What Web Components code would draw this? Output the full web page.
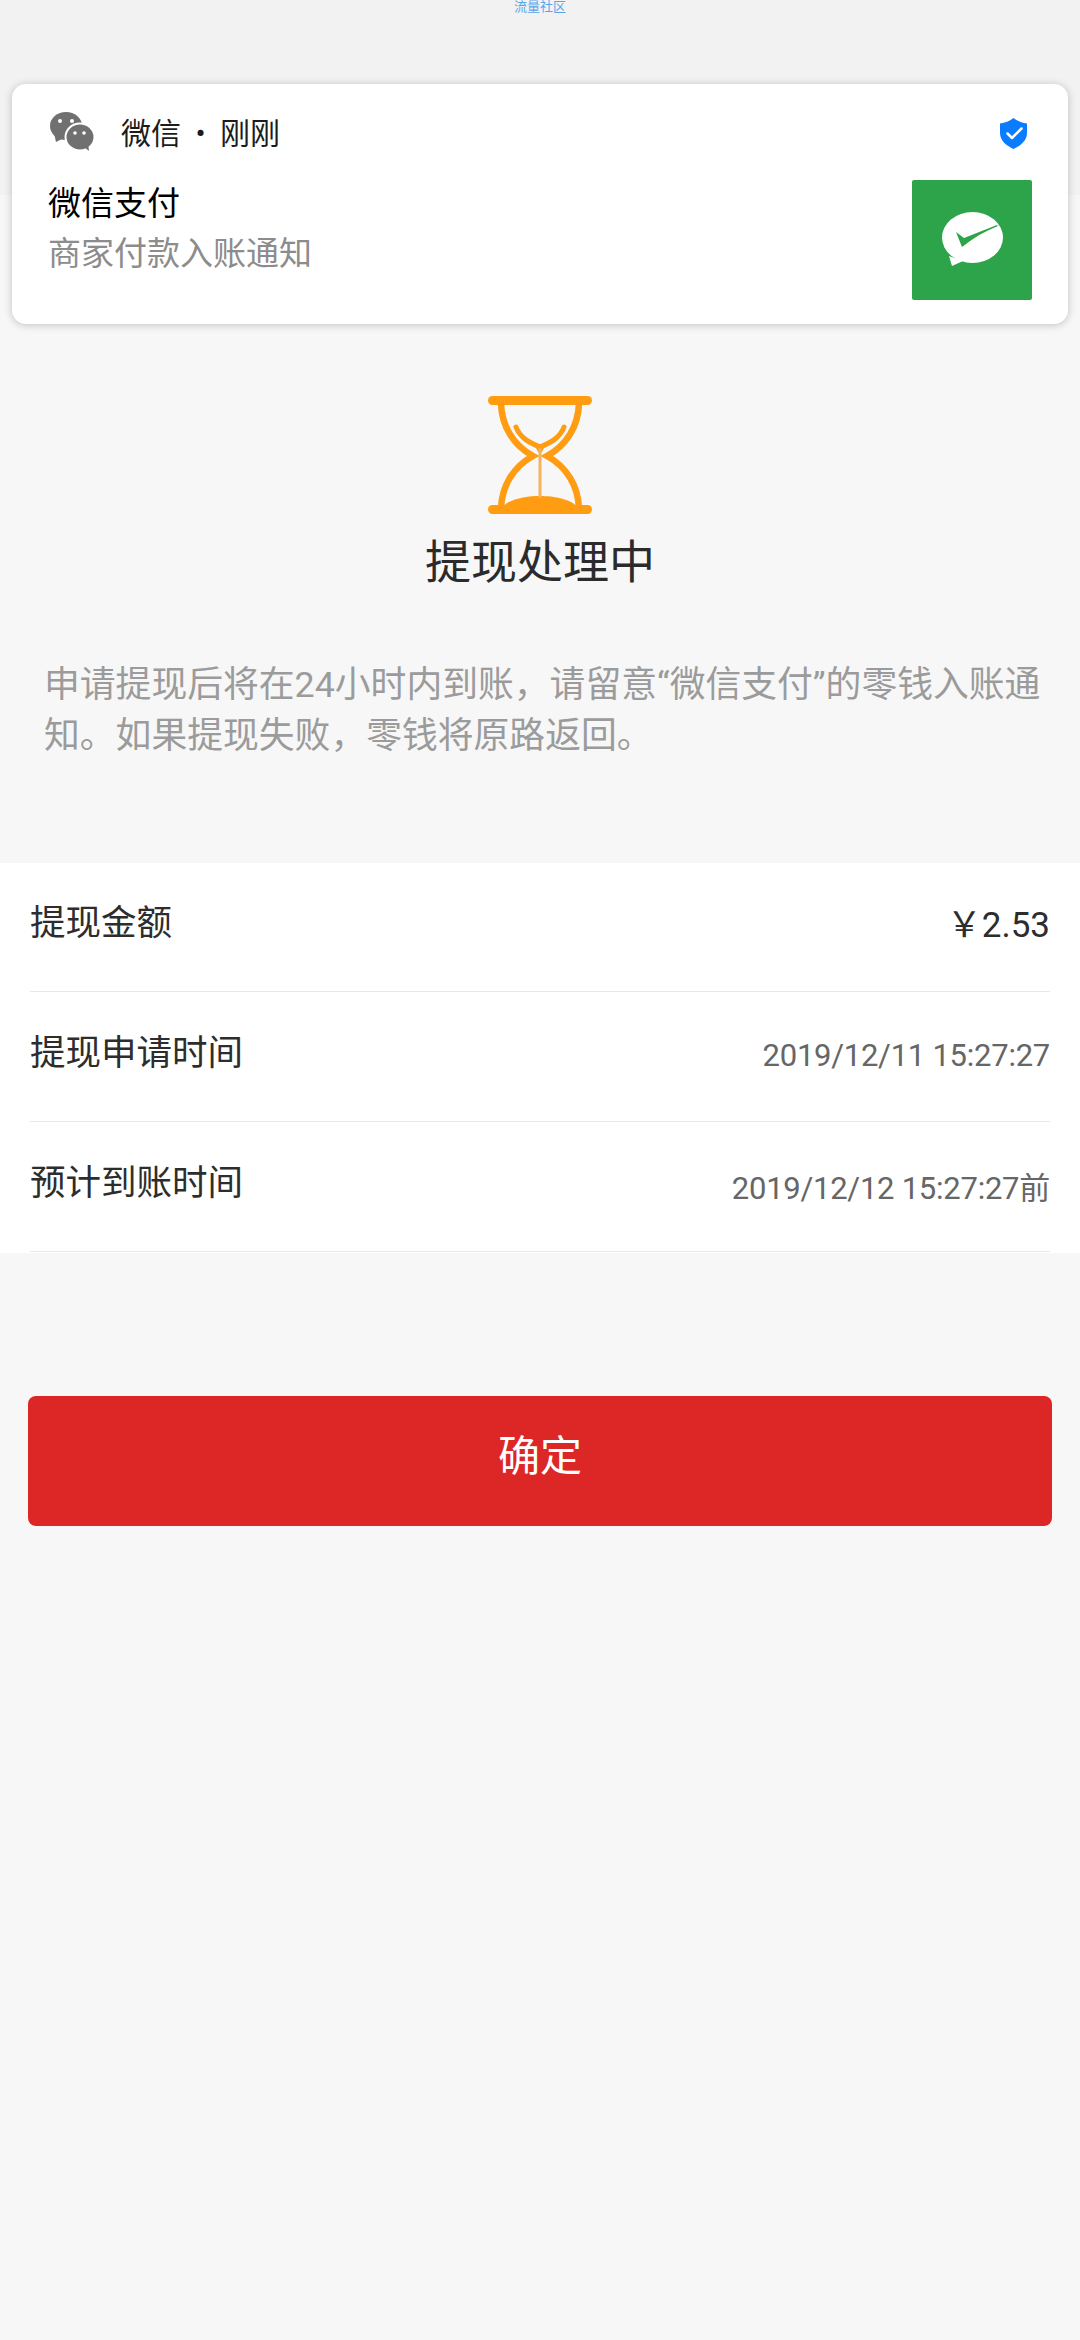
<!DOCTYPE html>
<html lang="zh">
<head>
<meta charset="utf-8">
<title>提现处理中</title>
<style>
    html, body { margin: 0; padding: 0; }
    body {
        width: 1080px;
        height: 2340px;
        background: #f7f7f7;
        position: relative;
        overflow: hidden;
        font-family: Roboto, "Noto Sans CJK SC", sans-serif;
    }
</style>
</head>
<body>
<top-bar>流量社区</top-bar>
<notify-card></notify-card>
<status-block title-text="提现处理中">申请提现后将在24小时内到账，请留意“微信支付”的零钱入账通知。如果提现失败，零钱将原路返回。</status-block>
<detail-list>
    <detail-row label="提现金额" value="￥2.53" big></detail-row>
    <detail-row label="提现申请时间" value="2019/12/11 15:27:27"></detail-row>
    <detail-row label="预计到账时间" value="2019/12/12 15:27:27前"></detail-row>
</detail-list>
<action-button>确定</action-button>

<script>
class TopBar extends HTMLElement {
    constructor() {
        super();
        this.attachShadow({ mode: 'open' });
        this.shadowRoot.innerHTML = `
            <style>
                :host {
                    display: block;
                    height: 195px;
                    background: #f2f2f2;
                    text-align: center;
                    font-size: 13px;
                    line-height: 14px;
                    color: #5aa5ea;
                }
            </style>
            <slot></slot>
        `;
    }
}

class NotifyCard extends HTMLElement {
    constructor() {
        super();
        this.attachShadow({ mode: 'open' });
        this.shadowRoot.innerHTML = `
            <style>
                :host {
                    display: block;
                    position: absolute;
                    left: 12px;
                    top: 84px;
                    width: 1056px;
                    height: 240px;
                    box-sizing: border-box;
                    padding: 28px 36px 0;
                    background: #fff;
                    border-radius: 14px;
                    box-shadow: 0 1px 8px rgba(0,0,0,.22);
                }
                .head {
                    display: flex;
                    align-items: center;
                    height: 40px;
                    font-size: 30px;
                    color: #1c1c1c;
                }
                .logo { width: 47px; height: 42px; margin-right: 26px; }
                .app { margin-bottom: 3px; }
                .dot { display: inline-block; width: 39px; text-align: center; }
                .shield { width: 27px; height: 31px; margin: 3px 5px 0 auto; }
                .body {
                    display: flex;
                    justify-content: space-between;
                    margin-top: 28px;
                }
                .title { font-size: 33px; line-height: 40px; margin-top: 4px; color: #000; }
                .sub { font-size: 33px; line-height: 40px; margin-top: 10px; color: #8c8c8c; }
                .pic { width: 120px; height: 120px; background: #2ea44a; border-radius: 2px; }
                .pic svg { display: block; width: 120px; height: 120px; }
            </style>
            <div class="head">
                <svg class="logo" viewBox="0 0 47 42">
                    <ellipse cx="18" cy="15" rx="16" ry="14" fill="#707071"/>
                    <path fill="#707071" d="M6 22l2 9 8-4z"/>
                    <circle cx="12" cy="10" r="2" fill="#fff"/>
                    <circle cx="24" cy="10" r="2" fill="#fff"/>
                    <ellipse cx="32" cy="26" rx="14.500" ry="13.500" fill="#707071" stroke="#fff" stroke-width="2"/>
                    <path fill="#707071" d="M36 36l5 4-1-8z"/>
                    <circle cx="27" cy="22" r="1.800" fill="#fff"/>
                    <circle cx="36" cy="22" r="1.800" fill="#fff"/>
                </svg>
                <span class="app">微信<span class="dot">•</span>刚刚</span>
                <svg class="shield" viewBox="0 0 27 31">
                    <path fill="#0a7cff" d="M13.500 0C17 3 22 5 27 5.500V15C27 23 20 28 13.500 31 7 28 0 23 0 15V5.500C5 5 10 3 13.500 0z"/>
                    <path fill="none" stroke="#fff" stroke-width="2.500" stroke-linecap="round" stroke-linejoin="round" d="M7.500 15.500l4.500 4.500 9.500-9.500"/>
                </svg>
            </div>
            <div class="body">
                <div>
                    <div class="title">微信支付</div>
                    <div class="sub">商家付款入账通知</div>
                </div>
                <div class="pic">
                    <svg viewBox="0 0 120 120">
                        <ellipse cx="60.500" cy="57.500" rx="30.500" ry="25.500" fill="#fff"/>
                        <path fill="#fff" d="M37 76l3 10 11-5z"/>
                        <path fill="#2ea44a" d="M44 52l6 15c11-9 23-16 36-21l-1-1-33 13z"/>
                    </svg>
                </div>
            </div>
        `;
    }
}

class StatusBlock extends HTMLElement {
    constructor() {
        super();
        this.attachShadow({ mode: 'open' });
        this.shadowRoot.innerHTML = `
            <style>
                :host {
                    display: flex;
                    flex-direction: column;
                    align-items: center;
                    height: 668px;
                    box-sizing: border-box;
                    padding-top: 201px;
                }
                svg { width: 104px; height: 120px; display: block; }
                h1 {
                    margin: 16px 0 0;
                    font-size: 46px;
                    line-height: 60px;
                    font-weight: 400;
                    color: #2b2b2b;
                }
                p {
                    margin: 68px 0 0;
                    align-self: stretch;
                    padding: 0 30px 0 44px;
                    font-size: 35.800px;
                    line-height: 51px;
                    color: #9b9b9b;
                }
            </style>
            <svg viewBox="0 0 104 120">
                <g fill="#ff9c12">
                    <rect x="0" y="0" width="104" height="9" rx="4.500"/>
                    <rect x="0" y="109" width="104" height="9" rx="4.500"/>
                    <path d="M14 112C20 103 38 100 52 100S84 103 90 112z"/>
                    <path d="M46 48h12l-4 8h-4z"/>
                </g>
                <g fill="none" stroke="#ff9c12">
                    <path stroke-width="6.500" d="M13 8C14 30 25 49 45 60 25 71 14 90 13 112M91 8C90 30 79 49 59 60 79 71 90 90 91 112"/>
                    <path stroke-width="5" stroke-linecap="round" d="M28 31C32 42 42 47 52 51 62 47 72 42 76 31"/>
                </g>
                <path stroke="#f5b25c" stroke-width="3" d="M52 52v50"/>
            </svg>
            <h1></h1>
            <p><slot></slot></p>
        `;
        this.shadowRoot.querySelector('h1').textContent = this.getAttribute('title-text');
    }
}

class DetailList extends HTMLElement {
    constructor() {
        super();
        this.attachShadow({ mode: 'open' });
        this.shadowRoot.innerHTML = `
            <style>
                :host { display: block; background: #fff; padding: 0 30px; height: 390px; }
            </style>
            <slot></slot>
        `;
    }
}

class DetailRow extends HTMLElement {
    constructor() {
        super();
        this.attachShadow({ mode: 'open' });
        this.shadowRoot.innerHTML = `
            <style>
                :host {
                    display: flex;
                    justify-content: space-between;
                    align-items: center;
                    height: 130px;
                    box-sizing: border-box;
                    border-bottom: 1.500px solid #e8e8e8;
                    padding-bottom: 14px;
                }
                :host(:first-child) { height: 128.500px; padding-bottom: 14.500px; }
                .label { font-size: 35.500px; color: #2d2d2d; }
                .value { font-size: 31px; letter-spacing: -.25px; color: #666; margin-top: 12px; }
                :host([big]) .value { font-size: 35px; letter-spacing: 0; color: #2d2d2d; margin-top: 4px; }
            </style>
            <span class="label"></span>
            <span class="value"></span>
        `;
        this.shadowRoot.querySelector('.label').textContent = this.getAttribute('label');
        this.shadowRoot.querySelector('.value').textContent = this.getAttribute('value');
    }
}

class ActionButton extends HTMLElement {
    constructor() {
        super();
        this.attachShadow({ mode: 'open' });
        this.shadowRoot.innerHTML = `
            <style>
                :host {
                    display: flex;
                    align-items: center;
                    justify-content: center;
                    margin: 143px 28px 0;
                    height: 130px;
                    padding-bottom: 18px;
                    box-sizing: border-box;
                    background: #dd2626;
                    border-radius: 8px;
                    color: #fff;
                    font-size: 42px;
                }
            </style>
            <slot></slot>
        `;
    }
}

customElements.define('top-bar', TopBar);
customElements.define('notify-card', NotifyCard);
customElements.define('status-block', StatusBlock);
customElements.define('detail-list', DetailList);
customElements.define('detail-row', DetailRow);
customElements.define('action-button', ActionButton);
</script>
</body>
</html>
